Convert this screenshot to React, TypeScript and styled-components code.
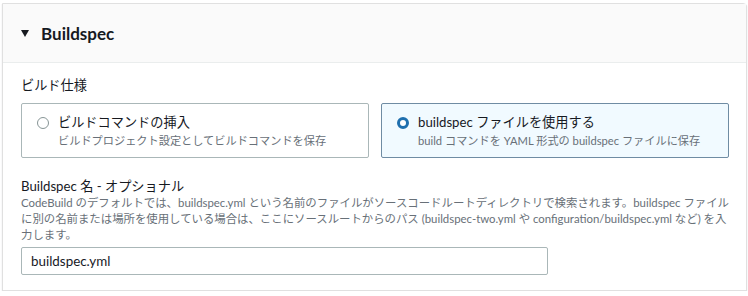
import styled, { createGlobalStyle } from "styled-components";

const GlobalStyle = createGlobalStyle`
  body {
    margin: 0;
    background: #ffffff;
    font-family: Lato, "Noto Sans CJK JP", sans-serif;
    color: #16191f;
  }
`;

const Panel = styled.section`
  margin: 3px 1px 0 2px;
  height: 288px;
  box-sizing: border-box;
  border: 1px solid #e0e0e0;
  border-top-right-radius: 4px;
  box-shadow: 0 1px 1px rgba(0, 21, 41, 0.25);
  background: #ffffff;
`;

const Header = styled.div`
  display: flex;
  align-items: center;
  gap: 12px;
  height: 58px;
  padding: 0 18px;
  background: #fafafa;
  border-bottom: 1px solid #eaeded;
`;

const Caret = styled.span`
  width: 0;
  height: 0;
  border-left: 4px solid transparent;
  border-right: 4px solid transparent;
  border-top: 7px solid #16191f;
  margin-top: 1px;
`;

const Title = styled.h2`
  margin: 0;
  font-size: 17px;
  font-weight: 700;
  color: #16191f;
`;

const Body = styled.div`
  padding: 12px 17px 0 18px;
`;

const Label = styled.div`
  font-size: 13.2px;
  line-height: 20px;
  color: #16191f;
`;

const Tiles = styled.div`
  display: grid;
  grid-template-columns: 348px 348px;
  gap: 12px;
  margin-top: 8px;
`;

const Tile = styled.label<{ $selected?: boolean }>`
  display: flex;
  gap: 9px;
  height: 55px;
  box-sizing: border-box;
  padding: 9px 15px;
  border: 1px solid ${p => (p.$selected ? "#6f8ca3" : "#aab7b8")};
  border-radius: 2px;
  background: ${p => (p.$selected ? "#f1faff" : "#ffffff")};
`;

const Radio = styled.span<{ $checked?: boolean }>`
  flex: none;
  width: 12px;
  height: 12px;
  margin-top: 4px;
  box-sizing: border-box;
  border-radius: 50%;
  border: ${p => (p.$checked ? "3.5px solid #1f6fae" : "1px solid #879596")};
  background: #ffffff;
`;

const TileText = styled.div`
  display: flex;
  flex-direction: column;
`;

const TileTitle = styled.span`
  font-size: 13.2px;
  line-height: 19px;
  color: #16191f;
`;

const TileSub = styled.span`
  font-size: 11.2px;
  line-height: 17px;
  color: #687078;
`;

const Field = styled.div`
  margin-top: 18px;
`;

const Description = styled.p`
  margin: -1px 0 0;
  font-size: 11.4px;
  line-height: 16px;
  color: #687078;
  width: 708px;
`;

const Input = styled.div`
  width: 527px;
  height: 28px;
  box-sizing: border-box;
  margin-top: 4px;
  padding: 0 9px;
  display: flex;
  align-items: center;
  border: 1px solid #aab7b8;
  border-radius: 2px;
  font-size: 13.4px;
  color: #16191f;
`;

export default function App() {
  return (
    <>
      <GlobalStyle />
      <Panel>
        <Header>
          <Caret />
          <Title>Buildspec</Title>
        </Header>
        <Body>
          <Label>ビルド仕様</Label>
          <Tiles>
            <Tile>
              <Radio />
              <TileText>
                <TileTitle>ビルドコマンドの挿入</TileTitle>
                <TileSub>ビルドプロジェクト設定としてビルドコマンドを保存</TileSub>
              </TileText>
            </Tile>
            <Tile $selected>
              <Radio $checked />
              <TileText>
                <TileTitle>buildspec ファイルを使用する</TileTitle>
                <TileSub>build コマンドを YAML 形式の buildspec ファイルに保存</TileSub>
              </TileText>
            </Tile>
          </Tiles>
          <Field>
            <Label>Buildspec 名 - オプショナル</Label>
            <Description>
              CodeBuild のデフォルトでは、buildspec.yml という名前のファイルがソースコードルートディレクトリで検索されます。buildspec ファイルに別の名前または場所を使用している場合は、ここにソースルートからのパス (buildspec-two.yml や configuration/buildspec.yml など) を入力します。
            </Description>
            <Input>buildspec.yml</Input>
          </Field>
        </Body>
      </Panel>
    </>
  );
}
